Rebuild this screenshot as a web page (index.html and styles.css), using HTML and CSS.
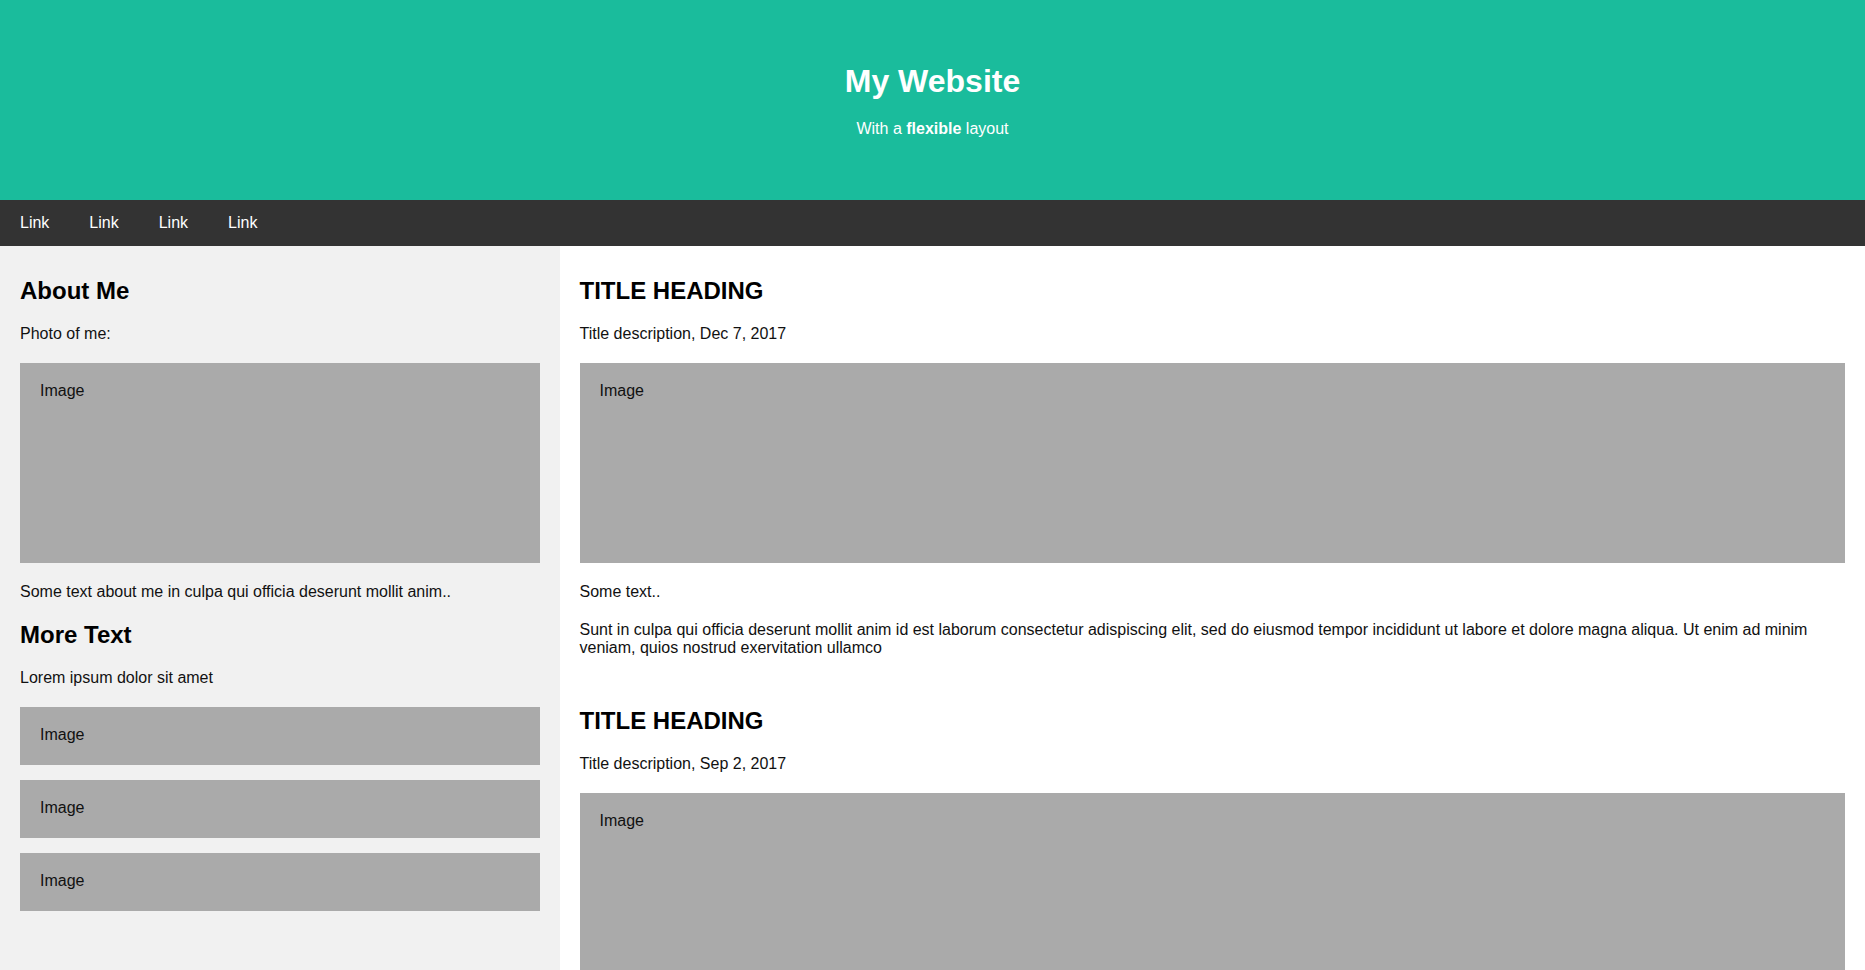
FILE: index.html
```html
<!DOCTYPE html>
<html>

<head>
    <meta charset="UTF-8">
    <title>My Website</title>
    <link rel="stylesheet" href="styles.css">
</head>

<body>
    <div class="header">
        <h1>My Website</h1>
        <p>With a <b>flexible</b> layout</p>
    </div>

    <div class="navbar">
        <a href="javascript:;">Link</a><a href="javascript:;">Link</a><a href="javascript:;">Link</a><a href="javascript:;">Link</a>
    </div>

    <div class="row">
        <div class="side">
            <h2>About Me</h2>
            <p>Photo of me:</p>
            <div class="fakeimg big">Image</div>
            <p>Some text about me in culpa qui officia deserunt mollit anim..</p>
            <h2>More Text</h2>
            <p>Lorem ipsum dolor sit amet</p>
            <div class="thumbs">
                <div class="fakeimg small">Image</div>
                <div class="fakeimg small">Image</div>
                <div class="fakeimg small">Image</div>
            </div>
        </div>
        <div class="main">
            <div class="post">
                <h2>TITLE HEADING</h2>
                <p>Title description, Dec 7, 2017</p>
                <div class="fakeimg big">Image</div>
                <p>Some text..</p>
                <p>Sunt in culpa qui officia deserunt mollit anim id est laborum consectetur adispiscing elit, sed do eiusmod tempor incididunt ut labore et dolore magna aliqua. Ut enim ad minim veniam, quios nostrud exervitation ullamco</p>
            </div>
            <div class="post">
                <h2>TITLE HEADING</h2>
                <p>Title description, Sep 2, 2017</p>
                <div class="fakeimg big">Image</div>
                <p>Some text..</p>
                <p>Sunt in culpa qui officia deserunt mollit anim id est laborum consectetur adispiscing elit, sed do eiusmod tempor incididunt ut labore et dolore magna aliqua. Ut enim ad minim veniam, quios nostrud exervitation ullamco</p>
            </div>
        </div>
    </div>
</body>

</html>
```
FILE: styles.css
```css
* {
    box-sizing: border-box;
}

body {
    margin: 0;
    font-family: "Liberation Sans", Arial, sans-serif;
    font-size: 16px;
    color: #000;
}

p {
    margin: 20px 0;
    color: #111;
}

h2 {
    font-size: 24px;
    margin: 20px 0;
}

.header {
    padding: 42.5px 42px;
    text-align: center;
    background-color: #1abc9c;
    color: #fff;
}

.header h1 {
    font-size: 32px;
    margin: 20px 0;
}

.header p {
    color: #fff;
}

.navbar {
    display: flex;
    background-color: #333;
}

.navbar a {
    color: #fff;
    padding: 14px 20px;
    text-decoration: none;
}

.row {
    display: flex;
}

.side {
    flex: 0 0 30%;
    background-color: #f1f1f1;
    padding: 10.5px 20px 20px;
}

.main {
    flex: 1;
    background-color: #fff;
    padding: 10.5px 20px 20px;
}

.post + .post {
    margin-top: 50px;
}

.fakeimg {
    background-color: #aaa;
    width: 100%;
    padding: 19px 20px;
    color: #111;
}

.fakeimg.big {
    height: 200px;
}

.fakeimg.small {
    height: 58px;
}

.thumbs {
    display: flex;
    flex-direction: column;
    gap: 15px;
}
```
